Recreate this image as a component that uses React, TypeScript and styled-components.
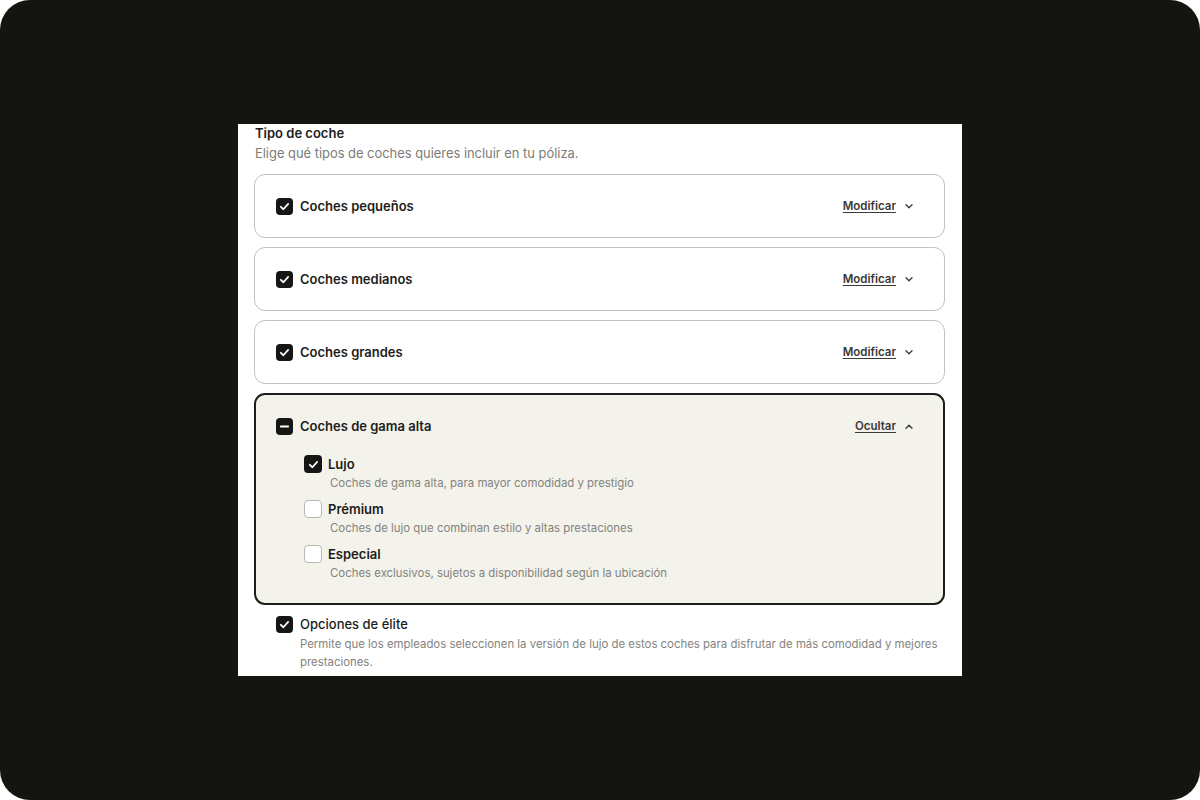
import React from "react";
import styled, { createGlobalStyle } from "styled-components";

const Global = createGlobalStyle`
  html, body { margin: 0; padding: 0; background: #ffffff; }
  body { font-family: "Inter", "Liberation Sans", sans-serif; -webkit-font-smoothing: antialiased; }
  * { box-sizing: border-box; }
`;

const Frame = styled.div`
  width: 1200px;
  height: 800px;
  background: #141411;
  border-radius: 30px;
  display: flex;
  align-items: center;
  justify-content: center;
`;

const Panel = styled.section`
  width: 724px;
  height: 552px;
  background: #ffffff;
  padding: 0 17px 0 16px;
  display: flex;
  flex-direction: column;
`;

const Title = styled.h2`
  margin: 0 0 0 1px;
  font-size: 13px;
  line-height: 18px;
  font-weight: 600;
  color: #1d1d1b;
`;

const Subtitle = styled.p`
  margin: 3px 0 0 1px;
  font-size: 12.9px;
  line-height: 18px;
  color: #7d7c78;
`;

const List = styled.div`
  margin-top: 11px;
  display: flex;
  flex-direction: column;
  gap: 9px;
`;

const Card = styled.div<{ $open?: boolean }>`
  border: ${(p) => (p.$open ? "2px solid #1d1d1b" : "1px solid #c2c2be")};
  background: ${(p) => (p.$open ? "#f3f2eb" : "#ffffff")};
  border-radius: 11px;
  padding: ${(p) => (p.$open ? "21px 30px 21px 20px" : "21px 31px 21px 21px")};
`;

const Header = styled.div`
  display: flex;
  align-items: center;
  height: 20px;
`;

const Box = styled.span<{ $state: "on" | "off" | "mixed"; $size?: number }>`
  flex: none;
  width: ${(p) => p.$size ?? 17}px;
  height: ${(p) => p.$size ?? 17}px;
  border-radius: 4px;
  background: ${(p) => (p.$state === "off" ? "#ffffff" : "#161614")};
  border: ${(p) => (p.$state === "off" ? "1px solid #b9b8b3" : "none")};
  display: flex;
  align-items: center;
  justify-content: center;
`;

const Label = styled.span`
  margin-left: 7px;
  font-size: 13px;
  font-weight: 600;
  color: #1d1d1b;
  flex: 1;
`;

const Action = styled.button`
  border: 0;
  background: none;
  padding: 0;
  display: flex;
  align-items: center;
  gap: 9px;
  font-family: inherit;
  font-size: 11.5px;
  font-weight: 600;
  color: #3a3a37;
  cursor: pointer;
  span { text-decoration: underline; text-underline-offset: 2px; }
`;

const SubList = styled.div`
  margin: 19px 0 0 28px;
  display: flex;
  flex-direction: column;
  gap: 8px;
`;

const Option = styled.div`
  display: grid;
  grid-template-columns: 17px 1fr;
  column-gap: 7px;
  row-gap: 2px;
  align-items: center;
`;

const OptTitle = styled.span`
  font-size: 13px;
  line-height: 18px;
  font-weight: 600;
  color: #1d1d1b;
`;

const OptDesc = styled.span<{ $lh?: number; $shift?: number }>`
  grid-column: 2;
  padding-left: ${(p) => p.$shift ?? 0}px;
  font-size: 11.4px;
  line-height: ${(p) => p.$lh ?? 17}px;
  color: #84837e;
`;

const Elite = styled.div`
  margin: 10px 0 0 22px;
  display: grid;
  grid-template-columns: 17px 1fr;
  column-gap: 7px;
  row-gap: 3px;
  align-items: center;
`;

const EliteTitle = styled.span`
  font-size: 13px;
  line-height: 18px;
  font-weight: 500;
  color: #1d1d1b;
`;

const Check = () => (
  <svg width="11" height="11" viewBox="0 0 12 12" fill="none">
    <path d="M2 6.3 4.8 9 10 3.2" stroke="#fff" strokeWidth="1.9" strokeLinecap="round" strokeLinejoin="round" />
  </svg>
);

const Dash = () => (
  <svg width="11" height="11" viewBox="0 0 12 12">
    <path d="M2 6h8" stroke="#fff" strokeWidth="2" strokeLinecap="round" />
  </svg>
);

const Chevron = ({ up }: { up?: boolean }) => (
  <svg width="8" height="5" viewBox="0 0 8 5" fill="none">
    <path
      d={up ? "M1 4.2 4 1.2 7 4.2" : "M1 0.8 4 3.8 7 0.8"}
      stroke="#3a3a37"
      strokeWidth="1.3"
      strokeLinecap="round"
      strokeLinejoin="round"
    />
  </svg>
);

const closed = ["Coches pequeños", "Coches medianos", "Coches grandes"];

const subs = [
  { title: "Lujo", desc: "Coches de gama alta, para mayor comodidad y prestigio", on: true },
  { title: "Prémium", desc: "Coches de lujo que combinan estilo y altas prestaciones", on: false },
  { title: "Especial", desc: "Coches exclusivos, sujetos a disponibilidad según la ubicación", on: false },
];

export default function App() {
  return (
    <>
      <Global />
      <Frame>
        <Panel>
          <Title>Tipo de coche</Title>
          <Subtitle>Elige qué tipos de coches quieres incluir en tu póliza.</Subtitle>
          <List>
            {closed.map((c) => (
              <Card key={c}>
                <Header>
                  <Box $state="on"><Check /></Box>
                  <Label>{c}</Label>
                  <Action><span>Modificar</span><Chevron /></Action>
                </Header>
              </Card>
            ))}
            <Card $open>
              <Header>
                <Box $state="mixed"><Dash /></Box>
                <Label>Coches de gama alta</Label>
                <Action><span>Ocultar</span><Chevron up /></Action>
              </Header>
              <SubList>
                {subs.map((s) => (
                  <Option key={s.title}>
                    <Box $state={s.on ? "on" : "off"} $size={18}>{s.on && <Check />}</Box>
                    <OptTitle>{s.title}</OptTitle>
                    <OptDesc $shift={2}>{s.desc}</OptDesc>
                  </Option>
                ))}
              </SubList>
            </Card>
          </List>
          <Elite>
            <Box $state="on"><Check /></Box>
            <EliteTitle>Opciones de élite</EliteTitle>
            <OptDesc $lh={17.5}>
              Permite que los empleados seleccionen la versión de lujo de estos coches para disfrutar de más comodidad y mejores prestaciones.
            </OptDesc>
          </Elite>
        </Panel>
      </Frame>
    </>
  );
}
